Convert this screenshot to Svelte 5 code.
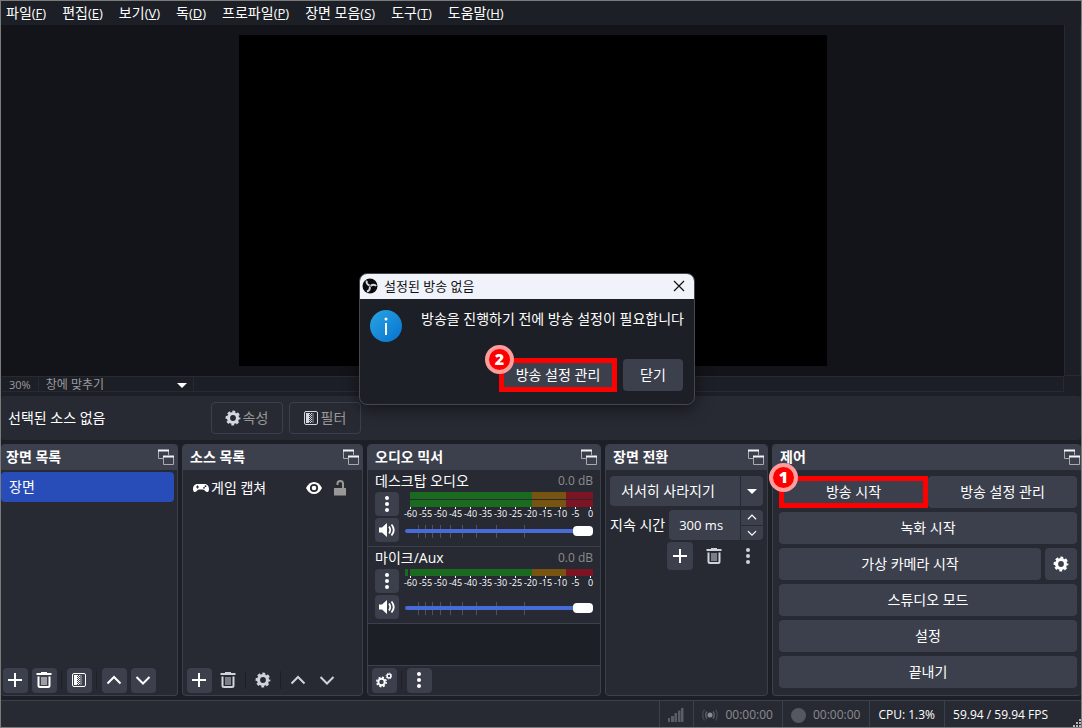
<script>
  const menus = [
    ['파일', 'F'],
    ['편집', 'E'],
    ['보기', 'V'],
    ['독', 'D'],
    ['프로파일', 'P'],
    ['장면 모음', 'S'],
    ['도구', 'T'],
    ['도움말', 'H'],
  ];

  const scale = [-60, -55, -50, -45, -40, -35, -30, -25, -20, -15, -10, -5, 0];
  const ticks = [13, 20, 27, 35, 45, 57, 71, 91, 119];

  let channels = $state([
    { name: '데스크탑 오디오', bars: [0, 8], volume: 100 },
    { name: '마이크/Aux', bars: [0], volume: 100 },
  ]);

  let duration = $state(300);
  let dialogOpen = $state(true);

  const step = n => {
    duration = Math.max(50, duration + n);
  };
</script>

{#snippet plus()}
  <svg class="icon" viewBox="0 0 16 16"><path d="M8 1v14M1 8h14" stroke="currentColor" stroke-width="2" fill="none" /></svg>
{/snippet}

{#snippet trash()}
  <svg class="icon" viewBox="0 0 16 16" fill="none" stroke="currentColor">
    <path d="M5 .5h6M.5 2h15" stroke-width="2" />
    <path d="M2.5 4.500v9q0 1.500 1.500 1.500h8q1.500 0 1.500-1.500v-9" stroke-width="2" />
    <path d="M6 5v8M8 5v8M10 5v8" />
  </svg>
{/snippet}

{#snippet gear()}
  <svg class="icon" viewBox="0 0 16 16" fill="none" stroke="currentColor">
    <circle cx="8" cy="8" r="4.5" stroke-width="3.2" />
    <circle cx="8" cy="8" r="6.3" stroke-width="2.2" stroke-dasharray="2.8 2.148" stroke-dashoffset="1.4" />
  </svg>
{/snippet}

{#snippet filter()}
  <svg class="icon" viewBox="0 0 16 16">
    <rect x="1.5" y="1.5" width="13" height="13" rx="1.5" stroke="currentColor" fill="none" />
    <path d="M3 3h3v10H3z" fill="currentColor" />
    <path d="M6.5 3v10M8.5 3v10" stroke="currentColor" stroke-dasharray="1 1" />
    <path d="M7.5 4v9" stroke="currentColor" stroke-dasharray="1 1" />
    <path d="M9 3h2v10H9z" fill="currentColor" opacity=".3" />
  </svg>
{/snippet}

{#snippet up()}
  <svg class="icon" viewBox="0 0 16 16"><path d="M1.500 11.500L8 5l6.500 6.500" stroke="currentColor" stroke-width="2" fill="none" /></svg>
{/snippet}

{#snippet down()}
  <svg class="icon" viewBox="0 0 16 16"><path d="M1.500 5L8 11.500 14.500 5" stroke="currentColor" stroke-width="2" fill="none" /></svg>
{/snippet}

{#snippet dots()}
  <svg class="icon" viewBox="0 0 16 16" fill="currentColor"><circle cx="8" cy="2" r="2" /><circle cx="8" cy="8" r="2" /><circle cx="8" cy="14" r="2" /></svg>
{/snippet}

{#snippet title(text)}
  <header class="dock-title">
    <h2>{text}</h2>
    <button class="popout" aria-label="{text} 분리">
      <svg width="16" height="16" viewBox="0 0 16 16" fill="none">
        <path d="M5 9.500H.5V1M10.500 1v5M5.500 7v8.500h10V7" stroke="#a9abb2" />
        <path d="M0 1.500h11M5 7.500h11" stroke="#f4f4f6" stroke-width="2" />
      </svg>
    </button>
  </header>
{/snippet}

<div class="window">
  <nav class="menubar">
    {#each menus as [label, key]}
      <button>{label}<span class="key">(<u>{key}</u>)</span></button>
    {/each}
  </nav>

  <main class="preview">
    <div class="canvas"></div>
    <div class="vscroll"></div>
  </main>

  <div class="zoom-row">
    <span class="percent">30%</span>
    <button class="fit">창에 맞추기 <i class="caret"></i></button>
    <span class="hscroll"></span>
  </div>

  <section class="context">
    <span class="context-label">선택된 소스 없음</span>
    <button class="outlined">{@render gear()}속성</button>
    <button class="outlined">{@render filter()}필터</button>
  </section>

  <div class="docks">
    <section class="dock first">
      {@render title('장면 목록')}
      <ul class="body scenes">
        <li><button class="scene">장면</button></li>
      </ul>
      <div class="toolbar">
        <button class="tool" aria-label="장면 추가">{@render plus()}</button>
        <button class="tool" aria-label="장면 제거">{@render trash()}</button>
        <i class="divider"></i>
        <button class="tool" aria-label="장면 필터">{@render filter()}</button>
        <i class="divider"></i>
        <button class="tool" aria-label="위로">{@render up()}</button>
        <button class="tool" aria-label="아래로">{@render down()}</button>
      </div>
    </section>

    <section class="dock">
      {@render title('소스 목록')}
      <ul class="body">
        <li class="source">
          <svg width="16" height="10" viewBox="0 0 16 10">
            <path d="M4.500 1h7c3 0 4.500 2.500 4.500 5s-1 3-2 3c-2 0-2-2.500-4-2.500H6C4 6.500 4 9 2 9 1 9 0 8.500 0 6s1.500-5 4.500-5z" fill="#fff" />
            <path d="M4.500 2.500v3M3 4h3" stroke="#272a33" />
            <circle cx="11" cy="4.800" r=".9" fill="#272a33" /><circle cx="12.500" cy="3.200" r=".9" fill="#272a33" />
          </svg>
          <span class="source-name">게임 캡쳐</span>
          <button class="flat" aria-label="표시">
            <svg width="16" height="12" viewBox="0 0 16 12">
              <path d="M0 6Q3 0 8 0t8 6q-3 6-8 6T0 6z" fill="#fff" />
              <circle cx="8" cy="6" r="3.200" fill="none" stroke="#272a33" stroke-width="1.800" />
            </svg>
          </button>
          <button class="flat" aria-label="잠금">
            <svg width="14" height="16" viewBox="0 0 14 16">
              <path d="M4.500 5V3.500Q4.500 1 7.200 1T10 3.500V9" fill="none" stroke="#9a9896" stroke-width="2" />
              <path d="M1 8h12v7.500H1z" fill="#9a9896" />
            </svg>
          </button>
        </li>
      </ul>
      <div class="toolbar">
        <button class="tool" aria-label="소스 추가">{@render plus()}</button>
        <button class="tool off" aria-label="소스 제거">{@render trash()}</button>
        <i class="divider"></i>
        <button class="tool off" aria-label="소스 속성">{@render gear()}</button>
        <i class="divider"></i>
        <button class="tool off" aria-label="위로">{@render up()}</button>
        <button class="tool off" aria-label="아래로">{@render down()}</button>
      </div>
    </section>

    <section class="dock">
      {@render title('오디오 믹서')}
      <div class="body mixer">
        {#each channels as channel, i}
          <div class="channel">
            <div class="channel-head">
              <label for="volume-{i}">{channel.name}</label>
              <span class="db">0.0 dB</span>
            </div>
            <div class="channel-body">
              <div class="channel-buttons">
                <button class="square" aria-label="메뉴">{@render dots()}</button>
                <button class="square" aria-label="음소거">
                  <svg class="icon" viewBox="0 0 16 16">
                    <path d="M0 5.500h3L8 1v14l-5-4.500H0z" fill="#fff" />
                    <path d="M10 4.500q2.500 3.500 0 7M12.500 2.500q4.500 5.500 0 11" fill="none" stroke="#fff" stroke-width="1.800" />
                  </svg>
                </button>
              </div>
              <div class="levels">
                <div>
                  {#each channel.bars as y}
                    <svg class="meter" viewBox="0 0 188 7" preserveAspectRatio="none">
                      <path d="M5 0h122v7H5z" fill="#1a6a20" />
                      <path d="M127 0h34v7h-34z" fill="#775510" />
                      <path d="M161 0h27v7h-27z" fill="#7c1424" />
                      {#if channel.bars.length === 1}
                        <path d="M0 0h3v7H0z" fill="#1a6a20" />
                      {/if}
                    </svg>
                  {/each}
                  <div class="scale">
                    {#each scale as n}<span>{n}</span>{/each}
                  </div>
                </div>
                <div class="slider">
                  <svg viewBox="0 0 188 13" preserveAspectRatio="none">
                    {#each ticks as t}
                      <path d="M{t + 0.5} 0v13" stroke="#50535f" />
                    {/each}
                  </svg>
                  <input id="volume-{i}" type="range" min="0" max="100" bind:value={channel.volume} />
                </div>
              </div>
            </div>
          </div>
        {/each}
      </div>
      <div class="toolbar">
        <button class="tool" aria-label="고급 오디오 속성">
          <svg class="icon" viewBox="0 0 16 16" fill="none" stroke="#fff">
            <circle cx="5.500" cy="10" r="3.200" stroke-width="2" />
            <circle cx="5.500" cy="10" r="4.700" stroke-width="1.500" stroke-dasharray="2 1.691" />
            <circle cx="13" cy="4" r="1.900" stroke-width="1.400" />
            <circle cx="13" cy="4" r="2.900" stroke-width="1" stroke-dasharray="1.200 1.077" />
          </svg>
        </button>
        <i class="divider"></i>
        <button class="tool" aria-label="믹서 메뉴">{@render dots()}</button>
      </div>
    </section>

    <section class="dock">
      {@render title('장면 전환')}
      <div class="body transitions">
        <button class="combo"><span>서서히 사라지기</span><span class="combo-arrow"><i class="caret"></i></span></button>
        <div class="duration">
          <label for="duration">지속 시간</label>
          <div class="spin">
            <input id="duration" value="{duration} ms" />
            <div class="spin-buttons">
              <button aria-label="증가" onclick={() => step(50)}>{@render up()}</button>
              <button aria-label="감소" onclick={() => step(-50)}>{@render down()}</button>
            </div>
          </div>
        </div>
        <div class="transition-tools">
          <button class="tool" aria-label="전환 추가">{@render plus()}</button>
          <button class="tool off" aria-label="전환 제거">{@render trash()}</button>
          <button class="tool off" aria-label="전환 메뉴">{@render dots()}</button>
        </div>
      </div>
    </section>

    <section class="dock last">
      {@render title('제어')}
      <div class="body controls">
        <div class="pair">
          <div class="marked">
            <button class="control">방송 시작</button>
            <span class="badge">1</span>
          </div>
          <button class="control">방송 설정 관리</button>
        </div>
        <button class="control">녹화 시작</button>
        <div class="camera">
          <button class="control">가상 카메라 시작</button>
          <button class="control" aria-label="가상 카메라 설정">{@render gear()}</button>
        </div>
        <button class="control">스튜디오 모드</button>
        <button class="control">설정</button>
        <button class="control">끝내기</button>
      </div>
    </section>
  </div>

  <footer class="status">
    <span class="cell signal">
      <svg width="16" height="16" viewBox="0 0 16 16" fill="#5b5d66">
        <path d="M0 11h2v4H0zM3 9h3v6H3zM6.500 6h2.500v9H6.500zM10 3.500h2.500V15H10zM13 1h2.500v14H13z" />
      </svg>
    </span>
    <span class="cell dim">
      <svg width="16" height="16" viewBox="0 0 16 16" fill="none" stroke="#5b5d66" stroke-width="1.500">
        <circle cx="8" cy="8" r="2.500" fill="#8a8c93" stroke="none" />
        <path d="M5 4.500q-2.500 3.500 0 7M11 4.500q2.500 3.500 0 7" />
        <path d="M2.500 2.500q-3.500 5.500 0 11M13.500 2.500q3.500 5.500 0 11" opacity=".5" />
      </svg>
      00:00:00
    </span>
    <span class="cell dim"><i class="record"></i>00:00:00</span>
    <span class="cell">CPU: 1.3%</span>
    <span class="cell fps">59.94 / 59.94 FPS</span>
    <svg class="grip" width="9" height="9" viewBox="0 0 9 9" fill="#b5b5b8">
      <path d="M7 1h2v2H7zM4 4h2v2H4zM7 4h2v2H7zM1 7h2v2H1zM4 7h2v2H4zM7 7h2v2H7z" />
    </svg>
  </footer>

  {#if dialogOpen}
    <div class="dialog" role="dialog" aria-labelledby="dialog-title">
      <header class="dialog-title">
        <svg width="16" height="16" viewBox="0 0 16 16">
          <circle cx="8" cy="8" r="7.500" fill="#0b0b0d" />
          {#each [0, 120, 240] as angle}
            <path
              d="M4.800 2.600Q3.800 5.800 7.600 7.600"
              transform="rotate({angle} 8 8)"
              fill="none"
              stroke="#d8d8dc"
              stroke-width="1.900"
            />
          {/each}
        </svg>
        <h1 id="dialog-title">설정된 방송 없음</h1>
        <button class="close" aria-label="창 닫기" onclick={() => (dialogOpen = false)}>
          <svg width="12" height="12" viewBox="0 0 12 12"><path d="M1 1l10 10M11 1L1 11" stroke="#111" stroke-width="1.200" /></svg>
        </button>
      </header>
      <div class="dialog-message">
        <svg width="32" height="32" viewBox="0 0 32 32">
          <defs>
            <linearGradient id="info" x1="0" y1="0" x2="1" y2="1">
              <stop offset="0" stop-color="#2aa5e2" />
              <stop offset="1" stop-color="#0671d0" />
            </linearGradient>
          </defs>
          <circle cx="16" cy="16" r="16" fill="url(#info)" />
          <path d="M16 13v12" stroke="#fff" stroke-width="2" />
          <circle cx="16" cy="9" r="1.500" fill="#fff" />
        </svg>
        <p>방송을 진행하기 전에 방송 설정이 필요합니다</p>
      </div>
      <div class="dialog-buttons">
        <div class="marked">
          <button class="control">방송 설정 관리</button>
          <span class="badge">2</span>
        </div>
        <button class="control" onclick={() => (dialogOpen = false)}>닫기</button>
      </div>
    </div>
  {/if}
</div>

<style>
:global(body) {
  background: #1d1f26;
}

* {
  box-sizing: border-box;
}

.window {
  border: 1px solid #7b7b7b;
  color: #fff;
  display: flex;
  flex-direction: column;
  font: 14px/18px "Open Sans", "Noto Sans CJK KR", sans-serif;
  min-height: 100vh;
  position: relative;
}

button,
input {
  background: none;
  border: 0;
  color: inherit;
  font: inherit;
  margin: 0;
  padding: 0;
}

h1,
h2,
p,
ul {
  font-size: inherit;
  font-weight: normal;
  list-style: none;
  margin: 0;
  padding: 0;
}

svg {
  display: block;
  flex: none;
}

.icon {
  height: 16px;
  width: 16px;
}

.menubar {
  display: flex;
  gap: 16px;
  height: 24px;
  padding: 0 5px;
}

.key {
  font-size: 13px;
}

.preview {
  background: #131419;
  display: flex;
  flex: 1;
  justify-content: center;
  padding: 10px 0;
  position: relative;
}

.canvas {
  aspect-ratio: 16 / 9;
  background: #000;
  height: 331px;
  margin-right: 16px;
}

.vscroll {
  background: #1d1f26;
  border: 1px solid #272a33;
  border-top: 0;
  bottom: 0;
  position: absolute;
  right: 0;
  top: 0;
  width: 17px;
}

.zoom-row {
  color: #9c9c9f;
  display: flex;
  font-size: 12px;
  height: 16px;
  line-height: 16px;
  padding: 0 17px 0 1px;
}

.zoom-row > * {
  border: 1px solid #272a33;
  border-left-width: 0;
}

.percent {
  font-size: 11px;
  padding: 0 7px;
}

.fit {
  align-items: center;
  display: flex;
  justify-content: space-between;
  padding: 2px 6px 0 7px;
  width: 155px;
}

.hscroll {
  flex: 1;
}

.caret {
  border: 5px solid transparent;
  border-bottom: 0;
  border-top-color: #fff;
}

.context {
  align-items: center;
  background: #272a33;
  border-radius: 4px;
  display: flex;
  gap: 6px;
  height: 44px;
  margin: 4px 0;
  padding-left: 7px;
}

.context-label {
  width: 197px;
}

.outlined {
  align-items: center;
  border: 1px solid #3c404d;
  border-radius: 4px;
  color: #9a9896;
  display: flex;
  gap: 2px;
  height: 32px;
  justify-content: center;
  padding-right: 1px;
  width: 72px;
}

.outlined .icon {
  color: #d5d7df;
}

.docks {
  display: grid;
  gap: 4px;
  grid-template-columns: 177fr 181fr 234fr 163fr 309fr;
  height: 252px;
}

.dock {
  background: #272a33;
  border: 1px solid #3c404d;
  border-radius: 4px;
  display: flex;
  flex-direction: column;
  min-width: 0;
}

.first {
  border-left: 0;
}

.last {
  border-right: 0;
}

.dock-title {
  align-items: center;
  background: #3c404d;
  border-radius: 3px 3px 0 0;
  display: flex;
  height: 25px;
  justify-content: space-between;
  padding: 0 3px 2px 7px;
}

.first .dock-title {
  padding-left: 5px;
}

.last .dock-title {
  padding-right: 1px;
}

h2 {
  font-weight: bold;
}

.body {
  flex: 1;
  min-height: 0;
}

.scenes {
  padding: 2px 3px 0 0;
}

.scene {
  background: #284cb8;
  border-radius: 4px;
  height: 30px;
  padding: 0 8px;
  text-align: left;
  width: 100%;
}

.source {
  align-items: center;
  display: flex;
  height: 36px;
  padding: 0 15px 0 10px;
}

.source-name {
  flex: 1;
  padding-left: 2px;
}

.flat + .flat {
  margin-left: 11px;
}

.toolbar {
  align-items: center;
  display: flex;
  gap: 4px;
  height: 29px;
  padding: 0 4px 1px;
}

.first .toolbar {
  padding-left: 2px;
}

.tool {
  align-items: center;
  background: #3c404d;
  border-radius: 4px;
  display: flex;
  height: 25px;
  justify-content: center;
  padding: 0 1px 1px 0;
  width: 25px;
}

.tool.off {
  background: none;
  color: #d0d2dc;
}

.divider {
  background: #1d1f26;
  height: 18px;
  margin-right: 1px;
  width: 1px;
}

.mixer {
  background: #1d1f26;
  border-bottom: 1px solid #3c404d;
}

.channel {
  background: #272a33;
  border-bottom: 1px solid #3c404d;
  height: 77px;
  padding: 2px 7px 0;
}

.channel-head {
  display: flex;
  justify-content: space-between;
}

.db {
  color: #8c8c8f;
  font-size: 12px;
}

.channel-body {
  display: flex;
  gap: 6px;
  padding-top: 2px;
}

.channel-buttons {
  display: grid;
  gap: 2px;
}

.square {
  background: #3c404d;
  border-radius: 4px;
  display: grid;
  height: 24px;
  place-items: center;
  width: 24px;
}

.levels {
  display: flex;
  flex: 1;
  flex-direction: column;
  justify-content: space-between;
}

.meter {
  height: 7px;
  width: 100%;
}

.meter + .meter {
  margin-top: 1px;
}

.scale {
  display: grid;
  font-size: 9px;
  grid-template-columns: repeat(13, 1fr);
  line-height: 10px;
  margin: 0 -5px 0 -2px;
}

.scale span {
  align-items: center;
  display: flex;
  flex-direction: column;
}

.scale span::before {
  background: #fff;
  content: "";
  height: 2px;
  width: 1px;
}

.slider {
  display: grid;
  height: 22px;
}

.slider > * {
  grid-area: 1 / 1;
}

.slider svg {
  align-self: center;
  height: 13px;
  width: 100%;
}

.slider input {
  appearance: none;
  margin: auto 0;
  width: 100%;
}

.slider input::-webkit-slider-runnable-track {
  background: #476bd7;
  border-radius: 2px;
  height: 4px;
}

.slider input::-webkit-slider-thumb {
  appearance: none;
  background: #fff;
  border-radius: 4px;
  height: 10px;
  margin-top: -3px;
  width: 20px;
}

.transitions {
  padding: 6px 4px;
}

.combo {
  background: #3c404d;
  border-radius: 4px;
  display: flex;
  height: 30px;
  justify-content: space-between;
  line-height: 30px;
  padding-left: 11px;
  width: 100%;
}

.combo-arrow {
  align-items: center;
  border-left: 1px solid #272a33;
  display: flex;
  height: 30px;
  justify-content: center;
  width: 23px;
}

.duration {
  align-items: center;
  display: flex;
  gap: 4px;
  margin: 4px 0 2px;
}

.duration label {
  white-space: nowrap;
}

.spin {
  background: #3c404d;
  border-radius: 4px;
  display: flex;
  flex: 1;
  height: 30px;
  min-width: 0;
}

.spin input {
  flex: 1;
  font-size: 13px;
  min-width: 0;
  padding-left: 10px;
}

.spin-buttons {
  border-left: 1px solid #272a33;
  display: grid;
  width: 23px;
}

.spin-buttons button {
  display: grid;
  place-items: center;
}

.spin-buttons button + button {
  border-top: 1px solid #272a33;
}

.spin-buttons .icon {
  height: 10px;
  width: 10px;
}

.transition-tools {
  display: flex;
  gap: 8px;
  justify-content: flex-end;
  padding-right: 2px;
}

.transition-tools .tool {
  height: 28px;
  padding: 0;
  width: 26px;
}

.controls {
  display: flex;
  flex-direction: column;
  gap: 4px;
  padding: 6px 4px 0 6px;
}

.control {
  background: #3c404d;
  border-radius: 4px;
  display: grid;
  height: 32px;
  place-items: center;
  width: 100%;
}

.pair {
  display: grid;
  grid-template-columns: 1fr 1fr;
}

.camera {
  display: grid;
  gap: 4px;
  grid-template-columns: 1fr 32px;
}

.marked {
  position: relative;
}

.marked .control {
  border: 5px solid #f00;
  border-radius: 0;
}

.badge {
  background: #f00;
  border: 4px solid #ff9c9c;
  border-radius: 50%;
  font-size: 16px;
  font-weight: 800;
  height: 29px;
  left: -10px;
  line-height: 21px;
  position: absolute;
  text-align: center;
  top: -13px;
  width: 29px;
}

.status {
  background: #272a33;
  border-top: 1px solid #3c404d;
  display: flex;
  font-size: 12px;
  height: 27px;
  justify-content: flex-end;
  margin-top: 4px;
  position: relative;
}

.cell {
  align-items: center;
  border-left: 1px solid #3c404d;
  display: flex;
  gap: 7px;
  padding: 2px 9px 0 8px;
}

.fps {
  padding-right: 33px;
}

.dim {
  color: #8c8c8f;
}

.record {
  background: #555861;
  border-radius: 50%;
  height: 15px;
  width: 15px;
}

.grip {
  bottom: 0;
  position: absolute;
  right: 0;
}

.dialog {
  background: #1d1f26;
  border: 1px solid #45474d;
  border-radius: 8px;
  box-shadow: 0 4px 16px rgba(0, 0, 0, 0.5);
  left: calc(50% - 182px);
  position: absolute;
  top: 272px;
  width: 336px;
}

.dialog-title {
  align-items: center;
  background: #f0f3fa;
  border-radius: 7px 7px 0 0;
  color: #111;
  display: flex;
  font-size: 13px;
  gap: 6px;
  height: 25px;
  padding: 0 9px 1px 2px;
}

.dialog-title h1 {
  flex: 1;
}

.dialog-message {
  display: flex;
  gap: 19px;
  padding: 11px 4px 0 10px;
}

.dialog-buttons {
  align-items: center;
  display: grid;
  gap: 6px;
  grid-template-columns: 118px 60px;
  justify-content: end;
  padding: 16px 11px 12px;
}

.dialog .marked .control {
  height: 34px;
}

.dialog .badge {
  left: -14px;
}
</style>
